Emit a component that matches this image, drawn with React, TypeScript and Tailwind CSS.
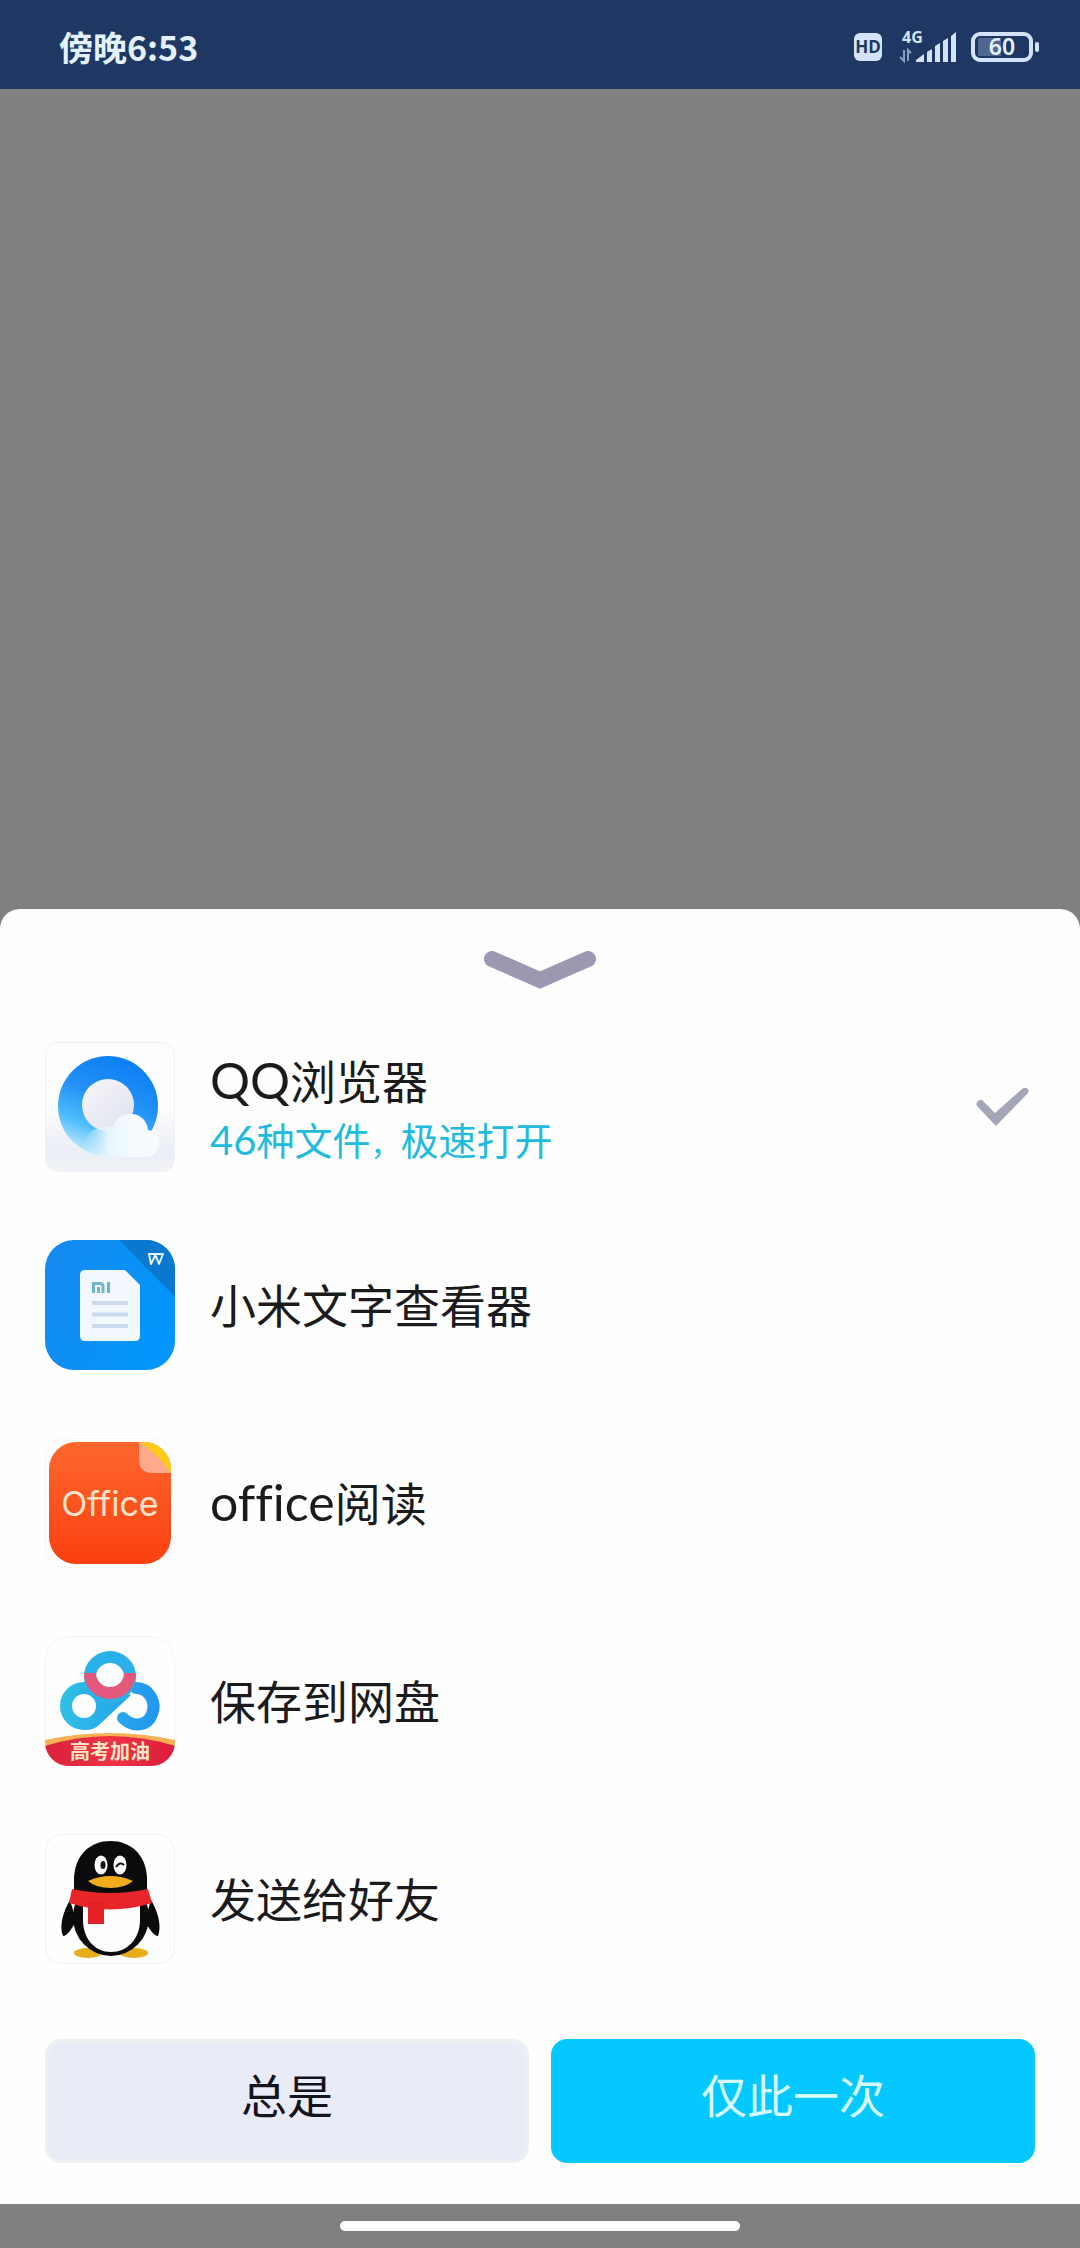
import { useState } from "react";
import type { ReactElement } from "react";

function StatusBar() {
  return (
    <header className="flex h-[89px] items-center justify-between bg-[#1f3863] pt-1 pr-10 pl-[59px] text-[#e3f2fd]">
      <time className="text-[34px] leading-10 font-bold">傍晚6:53</time>
      <div className="flex items-center">
        <span className="flex h-7 w-7 items-center justify-center rounded-md bg-[#d5e3f8] font-['Open_Sans'] text-[17px] font-bold text-[#1f3863]">
          HD
        </span>
        <svg viewBox="0 -10 58 54" className="ml-[17px] h-[54px] w-[58px]" role="img" aria-label="4G">
          <text x="3" y="13" fontSize="16" fontWeight="700" fontFamily="Open Sans, sans-serif" fill="#d5e3f8">
            4G
          </text>
          <path d="M5 20v11l-4-4M9 31v-11l3 3" fill="none" stroke="#8b9cba" strokeWidth="2" />
          <path
            d="M17 32v-2l8-6v8zM28 32V22l5-3v13zM36 32V16l5-3v19zM44 32V11l5-3v24zM52 32V6l5-4v30z"
            fill="#d5e3f8"
          />
        </svg>
        <svg viewBox="0 0 69 32" className="ml-[14px] h-8 w-[69px]" role="img" aria-label="电量 60%">
          <rect x="7" y="7" width="23" height="18" fill="#50658f" />
          <rect x="2" y="3" width="58" height="26" rx="7" fill="none" stroke="#d5e3f8" strokeWidth="4" />
          <rect x="64" y="11" width="4" height="10" rx="2" fill="#d5e3f8" />
          <text
            x="31"
            y="24"
            textAnchor="middle"
            fontSize="23"
            fontWeight="600"
            fontFamily="Noto Sans, sans-serif"
            fill="#e3f2fd"
          >
            60
          </text>
        </svg>
      </div>
    </header>
  );
}

function BrowserIcon() {
  return (
    <svg viewBox="0 0 130 130" className="h-full w-full">
      <defs>
        <linearGradient id="tile" x1="0" y1="0" x2="0" y2="1">
          <stop offset="0.5" stopColor="#fdfdfe" />
          <stop offset="0.85" stopColor="#eaedf5" />
          <stop offset="1" stopColor="#f2f3f8" />
        </linearGradient>
        <linearGradient id="ring" x1="0.75" y1="0.1" x2="0.4" y2="1">
          <stop offset="0" stopColor="#0d80f5" />
          <stop offset="0.4" stopColor="#2391f6" />
          <stop offset="0.75" stopColor="#50bffb" />
          <stop offset="1" stopColor="#b9e6fd" />
        </linearGradient>
        <linearGradient id="hole" x1="0" y1="0" x2="1" y2="1">
          <stop offset="0" stopColor="#f6f6fa" />
          <stop offset="1" stopColor="#dfe1ec" />
        </linearGradient>
        <linearGradient id="cloud" x1="0" y1="0" x2="1" y2="0">
          <stop offset="0" stopColor="#d6effc" stopOpacity="0" />
          <stop offset="0.35" stopColor="#e6f5fe" />
          <stop offset="0.7" stopColor="#f7fbff" />
        </linearGradient>
      </defs>
      <rect x="0.5" y="0.5" width="129" height="129" rx="12" fill="url(#tile)" stroke="#f1f1f3" />
      <circle cx="63" cy="64" r="50" fill="url(#ring)" />
      <circle cx="63" cy="63" r="26" fill="url(#hole)" />
      <path
        d="M36 106C38 90 52 84 68 84C71 76 78 72 86 72C96 72 102 79 103 88C110 89 114 94 114 101C114 109 108 115 101 115H60C50 115 42 112 36 106Z"
        fill="url(#cloud)"
      />
    </svg>
  );
}

function DocumentIcon() {
  return (
    <svg viewBox="0 0 130 130" className="h-full w-full">
      <defs>
        <linearGradient id="doc-bg" x1="0" y1="0" x2="1" y2="0.4">
          <stop offset="0" stopColor="#1689ee" />
          <stop offset="1" stopColor="#0396fc" />
        </linearGradient>
        <clipPath id="doc-clip">
          <rect width="130" height="130" rx="29" />
        </clipPath>
      </defs>
      <g clipPath="url(#doc-clip)">
        <rect width="130" height="130" fill="url(#doc-bg)" />
        <path d="M74 0H130V57Z" fill="#0a78cf" />
      </g>
      <path d="M40 30H80L95 45V96Q95 101 90 101H40Q35 101 35 96V35Q35 30 40 30Z" fill="#f3f8fe" />
      <path d="M48.500 53V43.500H55Q58 43.500 58 46.500V53M53.500 47V53M63.500 42V53" fill="none" stroke="#6fb4cf" strokeWidth="3" />
      <path d="M47 63H83M47 74.500H83M47 86H83" stroke="#cbdbed" strokeWidth="4" />
      <path
        d="M103 14H110L114 24L118 14H111L106 24L104 14"
        fill="none"
        stroke="#e2f5ff"
        strokeWidth="2"
        strokeLinejoin="round"
      />
    </svg>
  );
}

function OfficeIcon() {
  return (
    <svg viewBox="0 0 130 130" className="h-full w-full">
      <defs>
        <linearGradient id="office-bg" x1="0" y1="0" x2="0" y2="1">
          <stop offset="0" stopColor="#fd672e" />
          <stop offset="1" stopColor="#fb4010" />
        </linearGradient>
        <clipPath id="office-clip">
          <rect x="4" y="4" width="122" height="122" rx="27" />
        </clipPath>
      </defs>
      <rect x="0.5" y="0.5" width="129" height="129" rx="20" fill="#fefefe" stroke="#f5f5f5" />
      <g clipPath="url(#office-clip)">
        <rect x="4" y="4" width="122" height="122" fill="url(#office-bg)" />
        <path d="M94 4H126V35H108Q94 35 94 21Z" fill="#fea98b" />
        <path d="M94 4H126V35C118 24 108 12 94 4Z" fill="#fdcb18" />
      </g>
      <text
        x="65"
        y="78"
        textAnchor="middle"
        fontSize="34"
        fontFamily="Inter, sans-serif"
        fill="#ffe3c8"
      >
        Office
      </text>
    </svg>
  );
}

function NetdiskIcon() {
  return (
    <svg viewBox="0 0 130 130" className="h-full w-full">
      <defs>
        <linearGradient id="disk-blue" gradientUnits="userSpaceOnUse" x1="16" y1="0" x2="114" y2="0">
          <stop offset="0" stopColor="#2fc0e4" />
          <stop offset="1" stopColor="#2196f0" />
        </linearGradient>
        <linearGradient id="banner" x1="0" y1="0" x2="1" y2="0">
          <stop offset="0" stopColor="#d9213d" />
          <stop offset="0.5" stopColor="#ee3345" />
          <stop offset="1" stopColor="#dc1c3d" />
        </linearGradient>
        <clipPath id="disk-clip">
          <rect width="130" height="130" rx="24" />
        </clipPath>
      </defs>
      <rect x="0.5" y="0.5" width="129" height="129" rx="24" fill="#fefefe" stroke="#f3f3f3" />
      <path d="M39 52L60 56L86 59L54 89Q49 94 40 94Z" fill="url(#disk-blue)" />
      <circle cx="39" cy="70" r="18" fill="#fefefe" stroke="url(#disk-blue)" strokeWidth="12" />
      <path
        d="M78 82C88 92 103 90 107 78C112 66 104 52 91 52"
        fill="none"
        stroke="url(#disk-blue)"
        strokeWidth="12"
        strokeLinecap="round"
      />
      <circle cx="65" cy="41" r="20" fill="#fefefe" stroke="#2bb1e9" strokeWidth="12" />
      <path d="M39 37H51A14 14 0 1 0 79 37H91A26 26 0 1 1 39 37Z" fill="#e3587b" />
      <g clipPath="url(#disk-clip)">
        <path d="M0 104Q65 90 130 104V130H0Z" fill="#f7b154" />
        <path d="M0 110Q65 90 130 110V130H0Z" fill="url(#banner)" />
      </g>
      <text
        x="65"
        y="123"
        textAnchor="middle"
        fontSize="20"
        fontWeight="700"
        fontFamily="Noto Sans CJK SC, sans-serif"
        fill="#ffe6c4"
      >
        高考加油
      </text>
    </svg>
  );
}

function PenguinIcon() {
  return (
    <svg viewBox="0 0 130 130" className="h-full w-full">
      <rect x="0.5" y="0.5" width="129" height="129" rx="16" fill="#fefefe" stroke="#f1f1f1" />
      <ellipse cx="43" cy="119" rx="14" ry="5" fill="#e8ad1a" />
      <ellipse cx="89" cy="119" rx="14" ry="5" fill="#e8ad1a" />
      <path
        d="M25 66C18 78 14 92 18 102C22 102 28 94 31 86ZM106 66C113 78 117 92 113 102C109 102 103 94 100 86Z"
        fill="#0b0b0b"
      />
      <ellipse cx="66" cy="83" rx="38" ry="39" fill="#0b0b0b" />
      <path d="M29 60V44C30 20 46 7 65.500 7S101 20 102 44V60Z" fill="#0b0b0b" />
      <path d="M38 70H95V86C95 105 82 118 66 118S38 105 38 86Z" fill="#fefefe" />
      <path d="M27 55Q65 63 103 55L107 69Q65 82 24 69Z" fill="#e8262a" />
      <path d="M43 68H59V90H43Z" fill="#e32125" />
      <ellipse cx="56" cy="31" rx="6.500" ry="9.500" fill="#fff" />
      <ellipse cx="75" cy="31" rx="6.500" ry="9.500" fill="#fff" />
      <ellipse cx="58" cy="31" rx="2.500" ry="4" fill="#111" />
      <path d="M71 33Q75 27 79 31" fill="none" stroke="#111" strokeWidth="2" />
      <path d="M43 47Q54 42 65.500 42T88 47Q80 54 65.500 54T43 47Z" fill="#f0ac1c" />
    </svg>
  );
}

type AppOption = {
  id: string;
  latin?: string;
  name: string;
  recommended?: boolean;
  Icon: () => ReactElement;
};

const options: AppOption[] = [
  { id: "browser", latin: "QQ", name: "浏览器", recommended: true, Icon: BrowserIcon },
  { id: "document", name: "小米文字查看器", Icon: DocumentIcon },
  { id: "office", latin: "office", name: "阅读", Icon: OfficeIcon },
  { id: "netdisk", name: "保存到网盘", Icon: NetdiskIcon },
  { id: "friend", name: "发送给好友", Icon: PenguinIcon },
];

export default function App() {
  const [selected, setSelected] = useState("browser");

  return (
    <div className="flex min-h-screen flex-col bg-[#808080] font-['Noto_Sans_CJK_SC',sans-serif] text-[#1b1b1d]">
      <StatusBar />
      <main className="mt-auto rounded-t-[20px] bg-[#fefefe] pb-[41px]">
        <button type="button" aria-label="收起" className="mx-auto flex h-[99px] items-center justify-center pt-[22px]">
          <svg viewBox="0 0 112 38" className="h-[38px] w-28">
            <path d="M8 8L56 29L104 8" fill="none" stroke="#9b99b1" strokeWidth="16" strokeLinecap="round" />
          </svg>
        </button>

        <div role="radiogroup" aria-label="打开方式">
          {options.map(({ id, latin, name, recommended, Icon }) => (
            <label key={id} className="flex h-[198px] cursor-pointer items-center pr-[51px] pl-[45px]">
              <input
                type="radio"
                name="app"
                value={id}
                checked={selected === id}
                onChange={() => setSelected(id)}
                className="sr-only"
              />
              <span className="h-[130px] w-[130px] shrink-0" aria-hidden="true">
                <Icon />
              </span>
              <span className={recommended ? "ml-[35px] flex grow flex-col pt-1" : "ml-[35px] flex grow flex-col pb-1"}>
                <span className="text-[46px] leading-[60px]">
                  {latin && (
                    <span className="font-['Lato'] text-[50px] leading-none [font-variant-ligatures:none]">{latin}</span>
                  )}
                  {name}
                </span>
                {recommended && (
                  <span className="text-[38px] leading-[60px] text-[#20bbdc]">
                    <span className="font-['Lato'] text-[40px] leading-none">46</span>种文件
                    <span className="text-[30px] leading-none">，</span>极速打开
                  </span>
                )}
              </span>
              {selected === id && (
                <svg viewBox="0 0 54 40" className="h-10 w-[54px]" aria-hidden="true">
                  <path d="M5 13Q0 15 2 19L21 39L53 6Q55 2 51 1Q49 0 47 2L20 26L8 14Q7 12 5 13Z" fill="#a5a5b8" />
                </svg>
              )}
            </label>
          ))}
        </div>

        <div className="mt-[41px] grid grid-cols-2 gap-[22px] px-[45px]">
          <button
            type="button"
            className="h-[124px] rounded-2xl border-4 border-[#eeeff3] bg-[#e9ebf7] pb-4 text-[46px] text-[#14141f]"
          >
            总是
          </button>
          <button type="button" className="h-[124px] rounded-2xl bg-[#04c8ff] pb-4 text-[46px] text-[#d4fbff]">
            仅此一次
          </button>
        </div>
      </main>
      <footer className="flex h-11 items-center justify-center">
        <div className="h-[10px] w-[37%] rounded-full bg-white" />
      </footer>
    </div>
  );
}
